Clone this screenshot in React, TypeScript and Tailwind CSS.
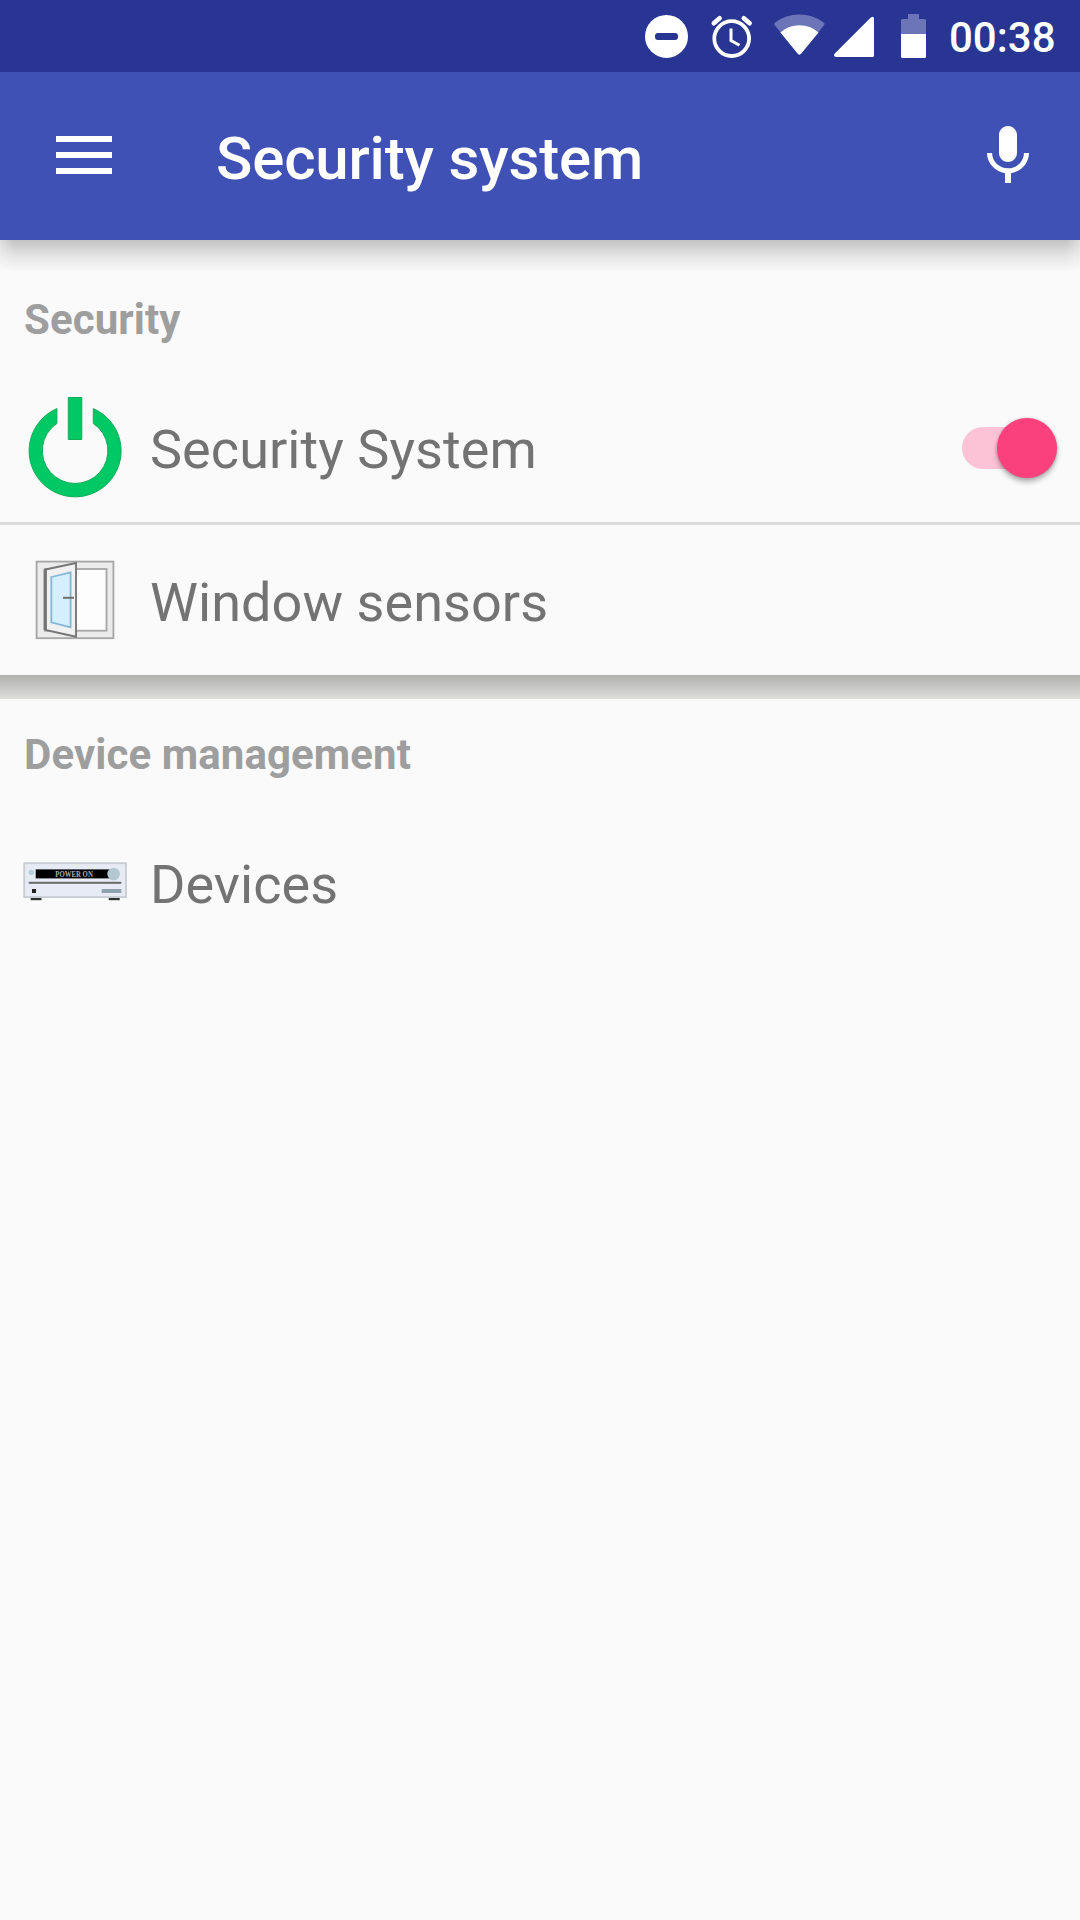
import React from "react";

function StatusBar() {
  return (
    <div className="flex h-[72px] items-center justify-end bg-[#283593] pr-[25px] text-white">
      <svg className="h-[72px] w-[60px]" viewBox="640 0 60 72">
        <circle cx="666.5" cy="36.4" r="21.5" fill="#fff" />
        <rect x="655" y="33" width="23" height="7" rx="3" fill="#283593" />
      </svg>
      <svg className="h-[72px] w-[64px]" viewBox="700 0 64 72" fill="none" stroke="#fff">
        <circle cx="731.7" cy="38.6" r="17.4" strokeWidth="3.8" />
        <path d="M731 28.5V40.5L739.5 45.3" strokeWidth="3" />
        <path d="M713.8 23.2L719.6 18.2M743.8 18.2L749.6 23.2" strokeWidth="4.6" strokeLinecap="round" />
      </svg>
      <svg className="h-[72px] w-[66px]" viewBox="764 0 66 72">
        <path
          d="M774.8 25.2Q773.4 23.6 775.2 22.4Q785.5 14.4 799.4 14.4Q813.4 14.4 823.6 22.4Q825.4 23.6 824 25.2L801.2 53.6Q799.4 55.8 797.6 53.6Z"
          fill="#6b75b8"
        />
        <path
          d="M780.4 32.4Q788.5 25.2 799.5 25.2Q810.4 25.2 818.6 32.4L801.2 53.6Q799.4 55.8 797.6 53.6Z"
          fill="#fff"
        />
      </svg>
      <svg className="h-[72px] w-[55px]" viewBox="830 0 55 72">
        <path d="M834.8 53.4L870.8 17.6Q874 15.6 874 18.8V55.4Q874 57 872.4 57H836Q832.6 56 834.8 53.4Z" fill="#fff" />
      </svg>
      <svg className="h-[72px] w-[64px]" viewBox="885 0 64 72">
        <path d="M908 14H919V19H924.5Q926 19 926 20.5V35H901V20.5Q901 19 902.5 19H908Z" fill="#6b75b8" />
        <path d="M901 34H926V56.5Q926 58 924.5 58H902.5Q901 58 901 56.5Z" fill="#fff" />
      </svg>
      <span className="w-[106px] pt-[4px] text-[42px] leading-none font-medium whitespace-nowrap">00:38</span>
    </div>
  );
}

function Toolbar() {
  return (
    <header className="flex h-[168px] items-center bg-[#3f51b5] text-white">
      <svg className="ml-[48px] h-[72px] w-[72px]" viewBox="0 0 72 72" fill="#fff">
        <path d="M8 16h56v6H8zM8 32h56v6H8zM8 48h56v6H8z" />
      </svg>
      <h1 className="ml-[96px] grow pt-[6px] text-[60px] leading-[70px] font-medium tracking-[-0.15px]">
        Security system
      </h1>
      <svg className="mr-[36px] h-[72px] w-[72px]" viewBox="0 0 24 24" fill="#fff">
        <path d="M12 14c1.66 0 2.99-1.34 2.99-3L15 5c0-1.66-1.34-3-3-3S9 3.34 9 5v6c0 1.66 1.34 3 3 3zm5.3-3c0 3-2.54 5.1-5.3 5.1S6.7 14 6.7 11H5c0 3.41 2.72 6.23 6 6.72V21h2v-3.28c3.28-.48 6-3.3 6-6.72h-1.7z" />
      </svg>
    </header>
  );
}

function PowerIcon() {
  return (
    <svg className="size-[102px] shrink-0" viewBox="0 0 102 102" fill="#00c864" stroke="#10ad5a" strokeWidth="1">
      <path d="M32.9 12.6A46 46 0 1 0 69.3 12.6V27.4A32.8 32.8 0 1 1 32.9 27.4Z" />
      <path d="M44.3 1.5H57.8V43.5H44.3Z" />
    </svg>
  );
}

function WindowIcon() {
  return (
    <svg className="size-[102px] shrink-0" viewBox="0 0 102 102">
      <rect x="12.6" y="12.6" width="76.8" height="76.6" fill="#ebebeb" stroke="#a6a6a6" strokeWidth="1.8" />
      <rect x="20.8" y="20" width="61.7" height="61.7" fill="#fdfdfd" stroke="#a6a6a6" strokeWidth="1.8" />
      <path d="M21.5 20.5L52 14V87.8L21.5 81Z" fill="#f1f1f1" stroke="#777" strokeWidth="1.9" />
      <path d="M21.2 20.5V81" stroke="#747474" strokeWidth="3.2" />
      <path d="M27.3 28L46.6 23.3V78.3L27.3 73.3Z" fill="#d6eefe" stroke="#82b7d6" strokeWidth="1.8" />
      <path d="M39 48.8H50" stroke="#707070" strokeWidth="2" />
    </svg>
  );
}

function ReceiverIcon() {
  return (
    <svg className="size-[102px] shrink-0 overflow-visible" viewBox="0 0 102 102">
      <rect x="0.2" y="32.2" width="101.8" height="33.9" fill="#e6ebf6" stroke="#c8cbd0" strokeWidth="1.8" />
      <circle cx="7.3" cy="41.4" r="2.7" fill="#b9d0da" />
      <rect x="11.7" y="38.4" width="76" height="9" fill="#000" />
      <text
        x="31.3"
        y="45.5"
        fontSize="7.6"
        fontWeight="700"
        fontFamily="Liberation Serif, serif"
        textLength="37.5"
        lengthAdjust="spacingAndGlyphs"
        fill="#b0b0b0"
      >
        POWER ON
      </text>
      <circle cx="89.6" cy="43" r="6.3" fill="#b4c8d2" />
      <rect x="4.7" y="50.8" width="92.6" height="2" fill="#6a6a6a" />
      <rect x="8" y="58" width="4" height="4" fill="#222" />
      <rect x="77.7" y="58" width="19.6" height="4" fill="#8ea2ae" />
      <rect x="6.7" y="67" width="10.8" height="2.2" fill="#303030" />
      <rect x="84.7" y="67" width="11" height="2.2" fill="#303030" />
    </svg>
  );
}

function Switch() {
  return (
    <div role="switch" aria-checked="true" className="mr-[23px] flex h-[62px] w-[95px] items-center justify-end pt-[2px]">
      <div className="flex h-[42px] w-full items-center justify-end rounded-full bg-[#fcc2d6]">
        <div className="mb-[1px] size-[60px] shrink-0 rounded-full bg-[#fb407e] shadow-[0_4px_5px_rgba(0,0,0,0.28),0_0_3px_rgba(0,0,0,0.2)]" />
      </div>
    </div>
  );
}

function SectionTitle({ children }: { children: React.ReactNode }) {
  return (
    <h2 className="flex h-[108px] items-center pt-[3px] pl-[24px] text-[42px] leading-[49px] font-bold tracking-[0.09px] text-[#9e9e9e]">
      {children}
    </h2>
  );
}

function Row({ icon, label, children }: { icon: React.ReactNode; label: string; children?: React.ReactNode }) {
  return (
    <div className="flex h-[150px] items-center gap-[24px] pl-[24px]">
      {icon}
      <span className="grow pt-[5px] text-[54px] leading-[63px] tracking-[0.06px] text-[#737373]">{label}</span>
      {children}
    </div>
  );
}

export default function App() {
  return (
    <div className="h-[1920px] w-[1080px] overflow-hidden bg-[#fafafa] font-[Roboto,sans-serif]">
      <div className="relative">
        <StatusBar />
        <Toolbar />
        <div className="absolute top-full left-0 h-[32px] w-full bg-linear-to-b from-[#c3c3c3] via-[#e4e4e4] to-[#fafafa] [mask-image:linear-gradient(to_right,rgba(0,0,0,0.55),#000_14px,#000_1066px,rgba(0,0,0,0.55))]" />
      </div>
      <main className="pt-[24px]">
        <section>
          <SectionTitle>Security</SectionTitle>
          <Row icon={<PowerIcon />} label="Security System">
            <Switch />
          </Row>
          <div className="h-[3px] bg-[#dcdcdc]" />
          <Row icon={<WindowIcon />} label="Window sensors" />
        </section>
        <div className="h-[24px] bg-linear-to-b from-[#b0b0af] to-[#dededd]" />
        <section>
          <SectionTitle>Device management</SectionTitle>
          <Row icon={<ReceiverIcon />} label="Devices" />
        </section>
      </main>
    </div>
  );
}
